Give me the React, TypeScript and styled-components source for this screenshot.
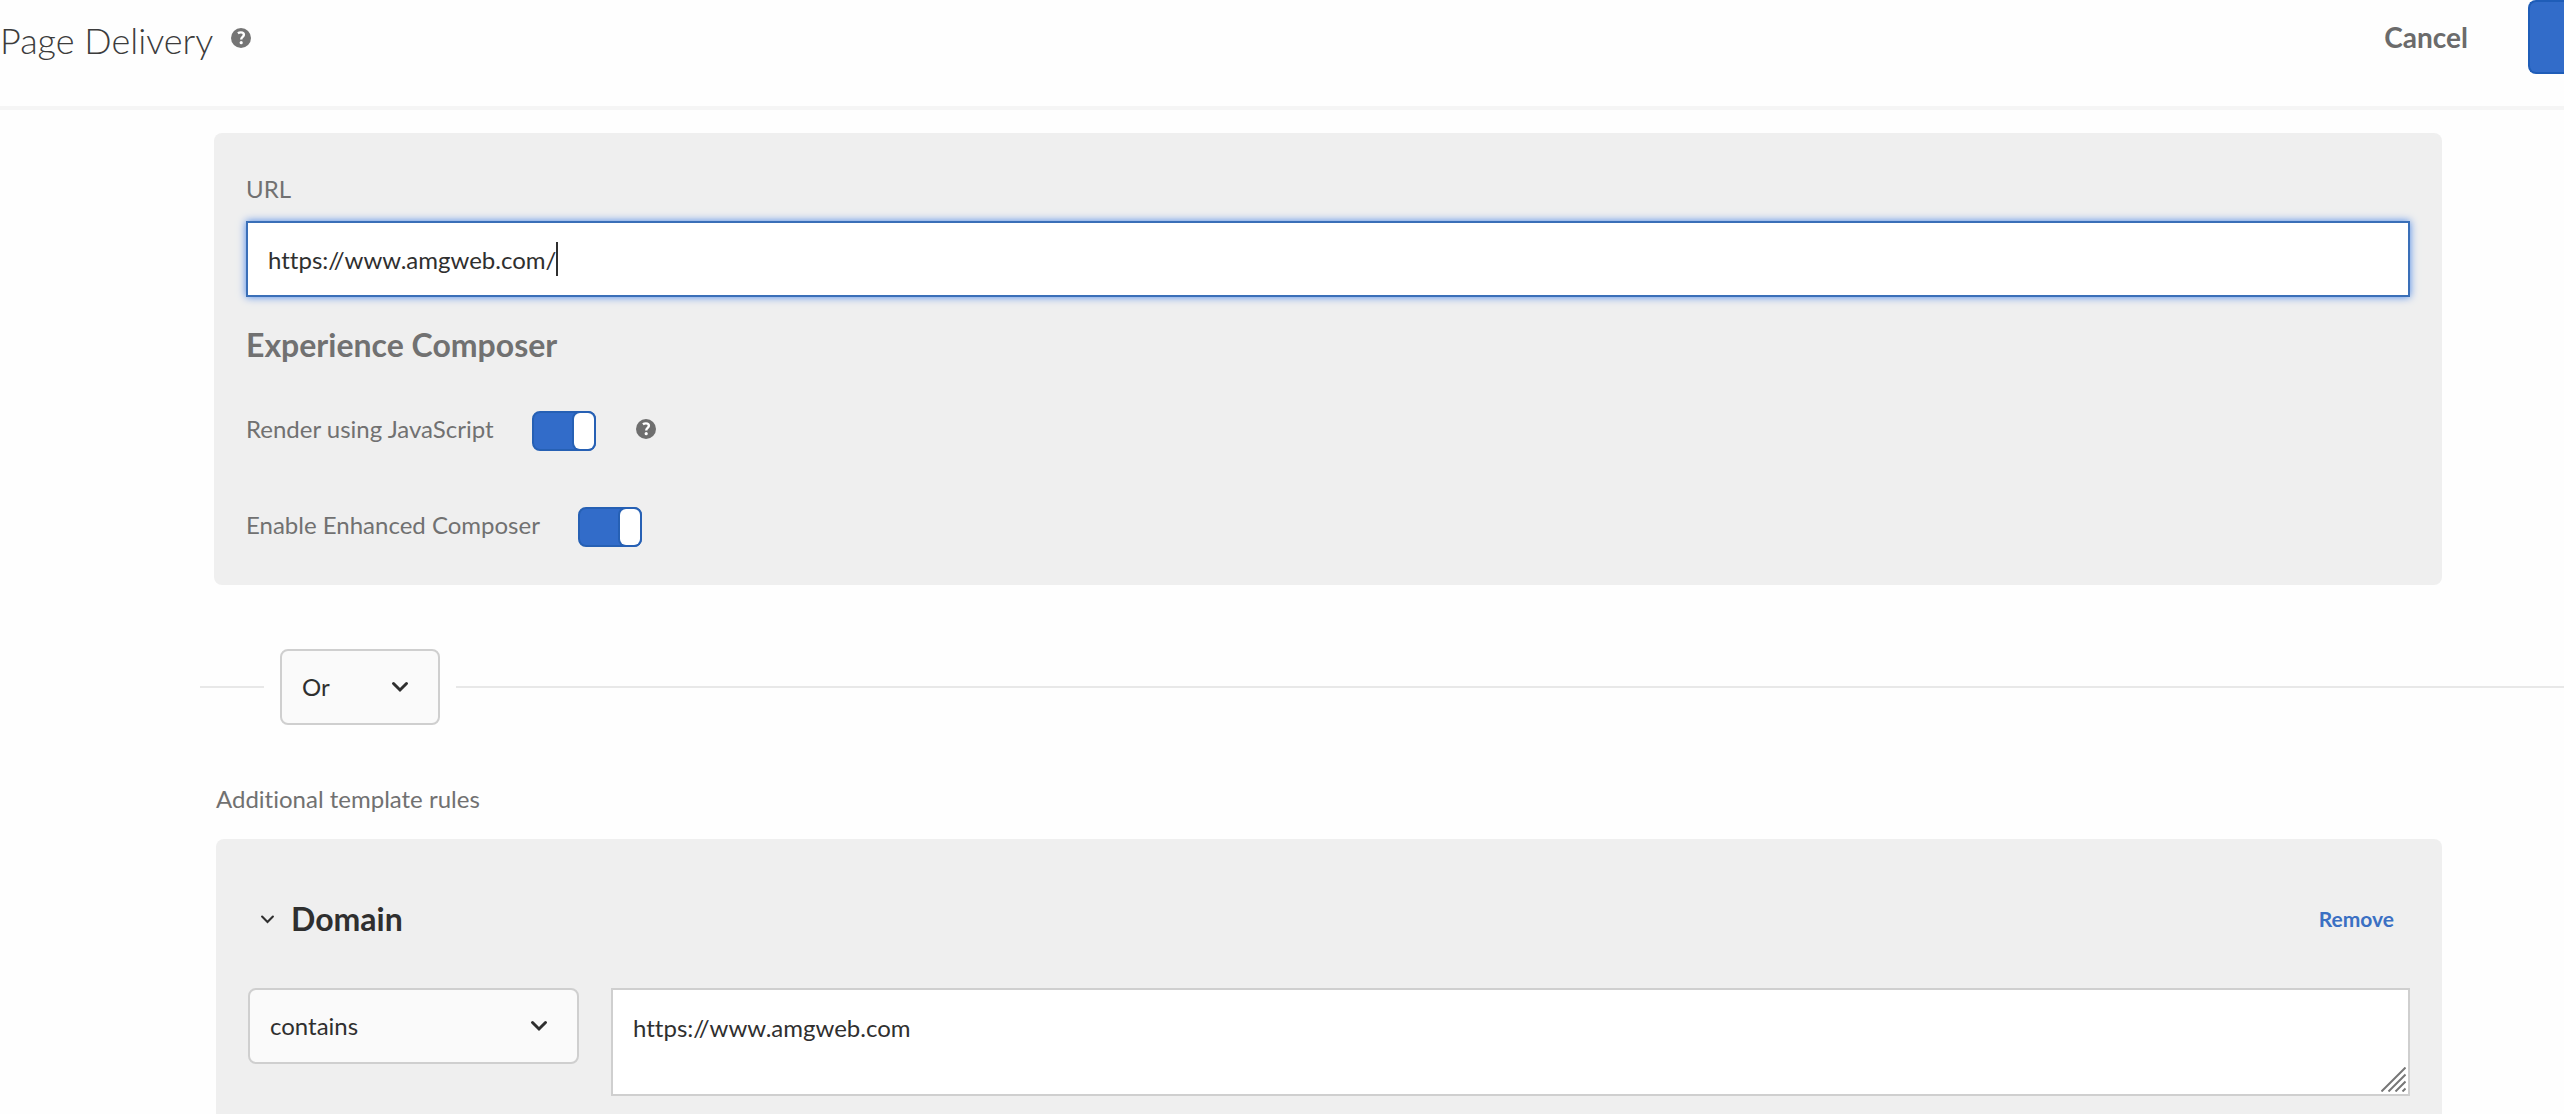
import React, { useState } from "react";
import styled, { createGlobalStyle } from "styled-components";

const GlobalStyle = createGlobalStyle`
  *, *::before, *::after { box-sizing: border-box; }
  body {
    margin: 0;
    background: #fefefe;
    color: #2f2f2f;
    font-family: Lato, "Noto Sans", sans-serif;
    font-size: 24px;
    line-height: 32px;
    font-variant-ligatures: none;
  }
  input, select, textarea, button { font: inherit; font-variant-ligatures: none; color: inherit; margin: 0; }
`;

const Page = styled.div`
  display: flex;
  flex-direction: column;
  min-height: 100vh;
`;

const Header = styled.header`
  display: flex;
  justify-content: space-between;
  align-items: flex-start;
  height: 110px;
  border-bottom: 4px solid #f5f5f5;
`;

const TitleGroup = styled.div`
  display: flex;
  align-items: center;
  gap: 18px;
  height: 76px;
`;

const Title = styled.h1`
  margin: 0;
  padding-top: 4px;
  font-size: 36px;
  line-height: 48px;
  font-weight: 300;
  color: #3c3c3c;
`;

const Actions = styled.div`
  display: flex;
  gap: 60px;
  height: 74px;
`;

const CancelButton = styled.button`
  padding: 0;
  border: 0;
  background: none;
  font-size: 28px;
  font-weight: 700;
  color: #6b6b6b;
`;

const SaveButton = styled.button`
  width: 36px;
  padding: 0;
  border: 2px solid #1f5db8;
  border-right: 0;
  border-radius: 8px 0 0 8px;
  background: #326cc9;
`;

const HelpButton = styled.button<{ $tone?: string }>`
  display: flex;
  align-items: center;
  height: 36px;
  padding: 0;
  border: 0;
  background: none;
  color: ${(p) => p.$tone ?? "#6e6e6e"};
`;

const Main = styled.main`
  flex: 1;
  display: flex;
  flex-direction: column;
  padding-top: 23px;
`;

const Panel = styled.section<{ $open?: boolean }>`
  margin: 0 122px 0 ${(p) => (p.$open ? 216 : 214)}px;
  padding: 32px;
  padding-bottom: ${(p) => (p.$open ? 18 : 38)}px;
  border-radius: ${(p) => (p.$open ? "8px 8px 0 0" : "8px")};
  background: #efefef;
  flex: ${(p) => (p.$open ? "1" : "none")};
`;

const FieldLabel = styled.label`
  display: block;
  padding: 8px 0 16px;
  color: #717171;
`;

const UrlBox = styled.div`
  display: flex;
  align-items: center;
  height: 76px;
  padding: 0 20px;
  border: 2px solid #3a6fb8;
  background: #fff;
  box-shadow: 0 0 8px #4a86e8;
`;

const UrlInput = styled.input`
  field-sizing: content;
  min-width: 8px;
  max-width: 100%;
  height: 72px;
  padding: 0;
  border: 0;
  outline: 0;
  background: none;
  caret-color: transparent;
`;

const Caret = styled.span`
  width: 2px;
  height: 34px;
  background: #2f2f2f;
`;

const SectionTitle = styled.h2`
  margin: 0;
  padding: 28px 0 46px;
  font-size: 32px;
  line-height: 40px;
  font-weight: 700;
  color: #717171;
`;

const SwitchRow = styled.div`
  display: flex;
  align-items: flex-start;
  height: 40px;
  line-height: 36px;
  color: #717171;

  & + & { margin-top: 56px; }
`;

const Switch = styled.input`
  appearance: none;
  display: flex;
  justify-content: flex-end;
  width: 64px;
  height: 40px;
  margin: 0 40px 0 38px;
  border: 2px solid #2660b4;
  border-radius: 8px;
  background: #326cc9;

  &::after {
    content: "";
    width: 20px;
    height: 36px;
    border-radius: 6px;
    background: #fff;
    box-shadow: 0 0 0 2px #2660b4;
  }
  &:not(:checked) { justify-content: flex-start; background: #d0d0d0; }
`;

const JoinRow = styled.div`
  display: flex;
  align-items: center;
  gap: 16px;
  margin: 64px 0 58px 200px;
`;

const Rule = styled.span<{ $grow?: boolean }>`
  flex: ${(p) => (p.$grow ? "1" : "0 0 64px")};
  height: 2px;
  background: #e8e8e8;
`;

const SelectWrap = styled.div<{ $width: number }>`
  display: grid;
  flex: 0 0 ${(p) => p.$width}px;
  height: 76px;
  align-items: center;

  > * { grid-area: 1 / 1; }
  > svg { justify-self: end; margin-right: 31px; pointer-events: none; }
`;

const Select = styled.select`
  appearance: none;
  width: 100%;
  height: 100%;
  padding: 0 60px 0 20px;
  border: 2px solid #cfcfcf;
  border-radius: 8px;
  background: #fafafa;
`;

const RulesTitle = styled.p`
  margin: 0 0 24px 216px;
  color: #717171;
`;

const RuleHeader = styled.div`
  display: flex;
  justify-content: space-between;
  align-items: center;
  padding: 28px 16px 49px 12px;
`;

const RuleToggle = styled.button`
  display: flex;
  align-items: center;
  gap: 16px;
  padding: 0;
  border: 0;
  background: none;
`;

const RuleName = styled.span`
  font-size: 32px;
  line-height: 40px;
  font-weight: 700;
  color: #2f2f2f;
`;

const RemoveButton = styled.button`
  padding: 0;
  border: 0;
  background: none;
  font-size: 21px;
  font-weight: 700;
  color: #3b70c3;
`;

const RuleBody = styled.div`
  display: flex;
  align-items: flex-start;
  gap: 32px;
`;

const ValueWrap = styled.div`
  position: relative;
  display: flex;
  flex: 1;
`;

const ValueArea = styled.textarea`
  flex: 1;
  height: 108px;
  padding: 22px 20px;
  border: 2px solid #cfcfcf;
  border-radius: 0;
  outline: 0;
  resize: none;
  background: #fff;
`;

const Grip = styled.svg`
  position: absolute;
  right: 4px;
  bottom: 4px;
  pointer-events: none;
`;

const HelpIcon = () => (
  <svg width="20" height="20" viewBox="0 0 20 20" aria-hidden="true">
    <circle cx="10" cy="10" r="10" fill="currentColor" />
    <path d="M6.900 5.300C7.800 4.700 8.900 4.400 9.900 4.400c1.900 0 3 1 3 2.400 0 2-2.700 2.300-2.700 4.600" fill="none" stroke="#fff" strokeWidth="2.400" />
    <circle cx="10.200" cy="14.700" r="1.600" fill="#fff" />
  </svg>
);

const Chevron = ({ size = 18, stroke = 3 }: { size?: number; stroke?: number }) => (
  <svg width={size} height={size} viewBox="0 0 18 18" aria-hidden="true">
    <path d="M2.500 5.500l6.500 6.500 6.500-6.500" fill="none" stroke="#2f2f2f" strokeWidth={stroke} strokeLinecap="round" strokeLinejoin="miter" />
  </svg>
);

export default function App() {
  const [url, setUrl] = useState("https://www.amgweb.com/");
  const [value, setValue] = useState("https://www.amgweb.com");

  return (
    <>
      <GlobalStyle />
      <Page>
        <Header>
          <TitleGroup>
            <Title>Page Delivery</Title>
            <HelpButton type="button" aria-label="Help" $tone="#757575"><HelpIcon /></HelpButton>
          </TitleGroup>
          <Actions>
            <CancelButton type="button">Cancel</CancelButton>
            <SaveButton type="button" aria-label="Save" />
          </Actions>
        </Header>
        <Main>
          <Panel>
            <FieldLabel htmlFor="url">URL</FieldLabel>
            <UrlBox>
              <UrlInput id="url" type="text" value={url} onChange={(e) => setUrl(e.target.value)} />
              <Caret />
            </UrlBox>
            <SectionTitle>Experience Composer</SectionTitle>
            <SwitchRow>
              <label htmlFor="render-js">Render using JavaScript</label>
              <Switch id="render-js" type="checkbox" role="switch" defaultChecked />
              <HelpButton type="button" aria-label="Help"><HelpIcon /></HelpButton>
            </SwitchRow>
            <SwitchRow>
              <label htmlFor="enhanced">Enable Enhanced Composer</label>
              <Switch id="enhanced" type="checkbox" role="switch" defaultChecked />
            </SwitchRow>
          </Panel>
          <JoinRow>
            <Rule />
            <SelectWrap $width={160}>
              <Select aria-label="Operator" defaultValue="Or">
                <option>Or</option>
              </Select>
              <Chevron />
            </SelectWrap>
            <Rule $grow />
          </JoinRow>
          <RulesTitle>Additional template rules</RulesTitle>
          <Panel $open>
            <RuleHeader>
              <RuleToggle type="button" aria-expanded="true">
                <Chevron size={15} stroke={2.5} />
                <RuleName>Domain</RuleName>
              </RuleToggle>
              <RemoveButton type="button">Remove</RemoveButton>
            </RuleHeader>
            <RuleBody>
              <SelectWrap $width={331}>
                <Select aria-label="Condition" defaultValue="contains">
                  <option>contains</option>
                </Select>
                <Chevron />
              </SelectWrap>
              <ValueWrap>
                <ValueArea aria-label="Domain value" value={value} onChange={(e) => setValue(e.target.value)} />
                <Grip width="25" height="25" viewBox="0 0 25 25" aria-hidden="true">
                  <path d="M0.500 24.500l24-24M7.500 24.500l17-17M14.500 24.500l10-10M21.500 24.500l3-3" stroke="#777" strokeWidth="2" />
                </Grip>
              </ValueWrap>
            </RuleBody>
          </Panel>
        </Main>
      </Page>
    </>
  );
}
